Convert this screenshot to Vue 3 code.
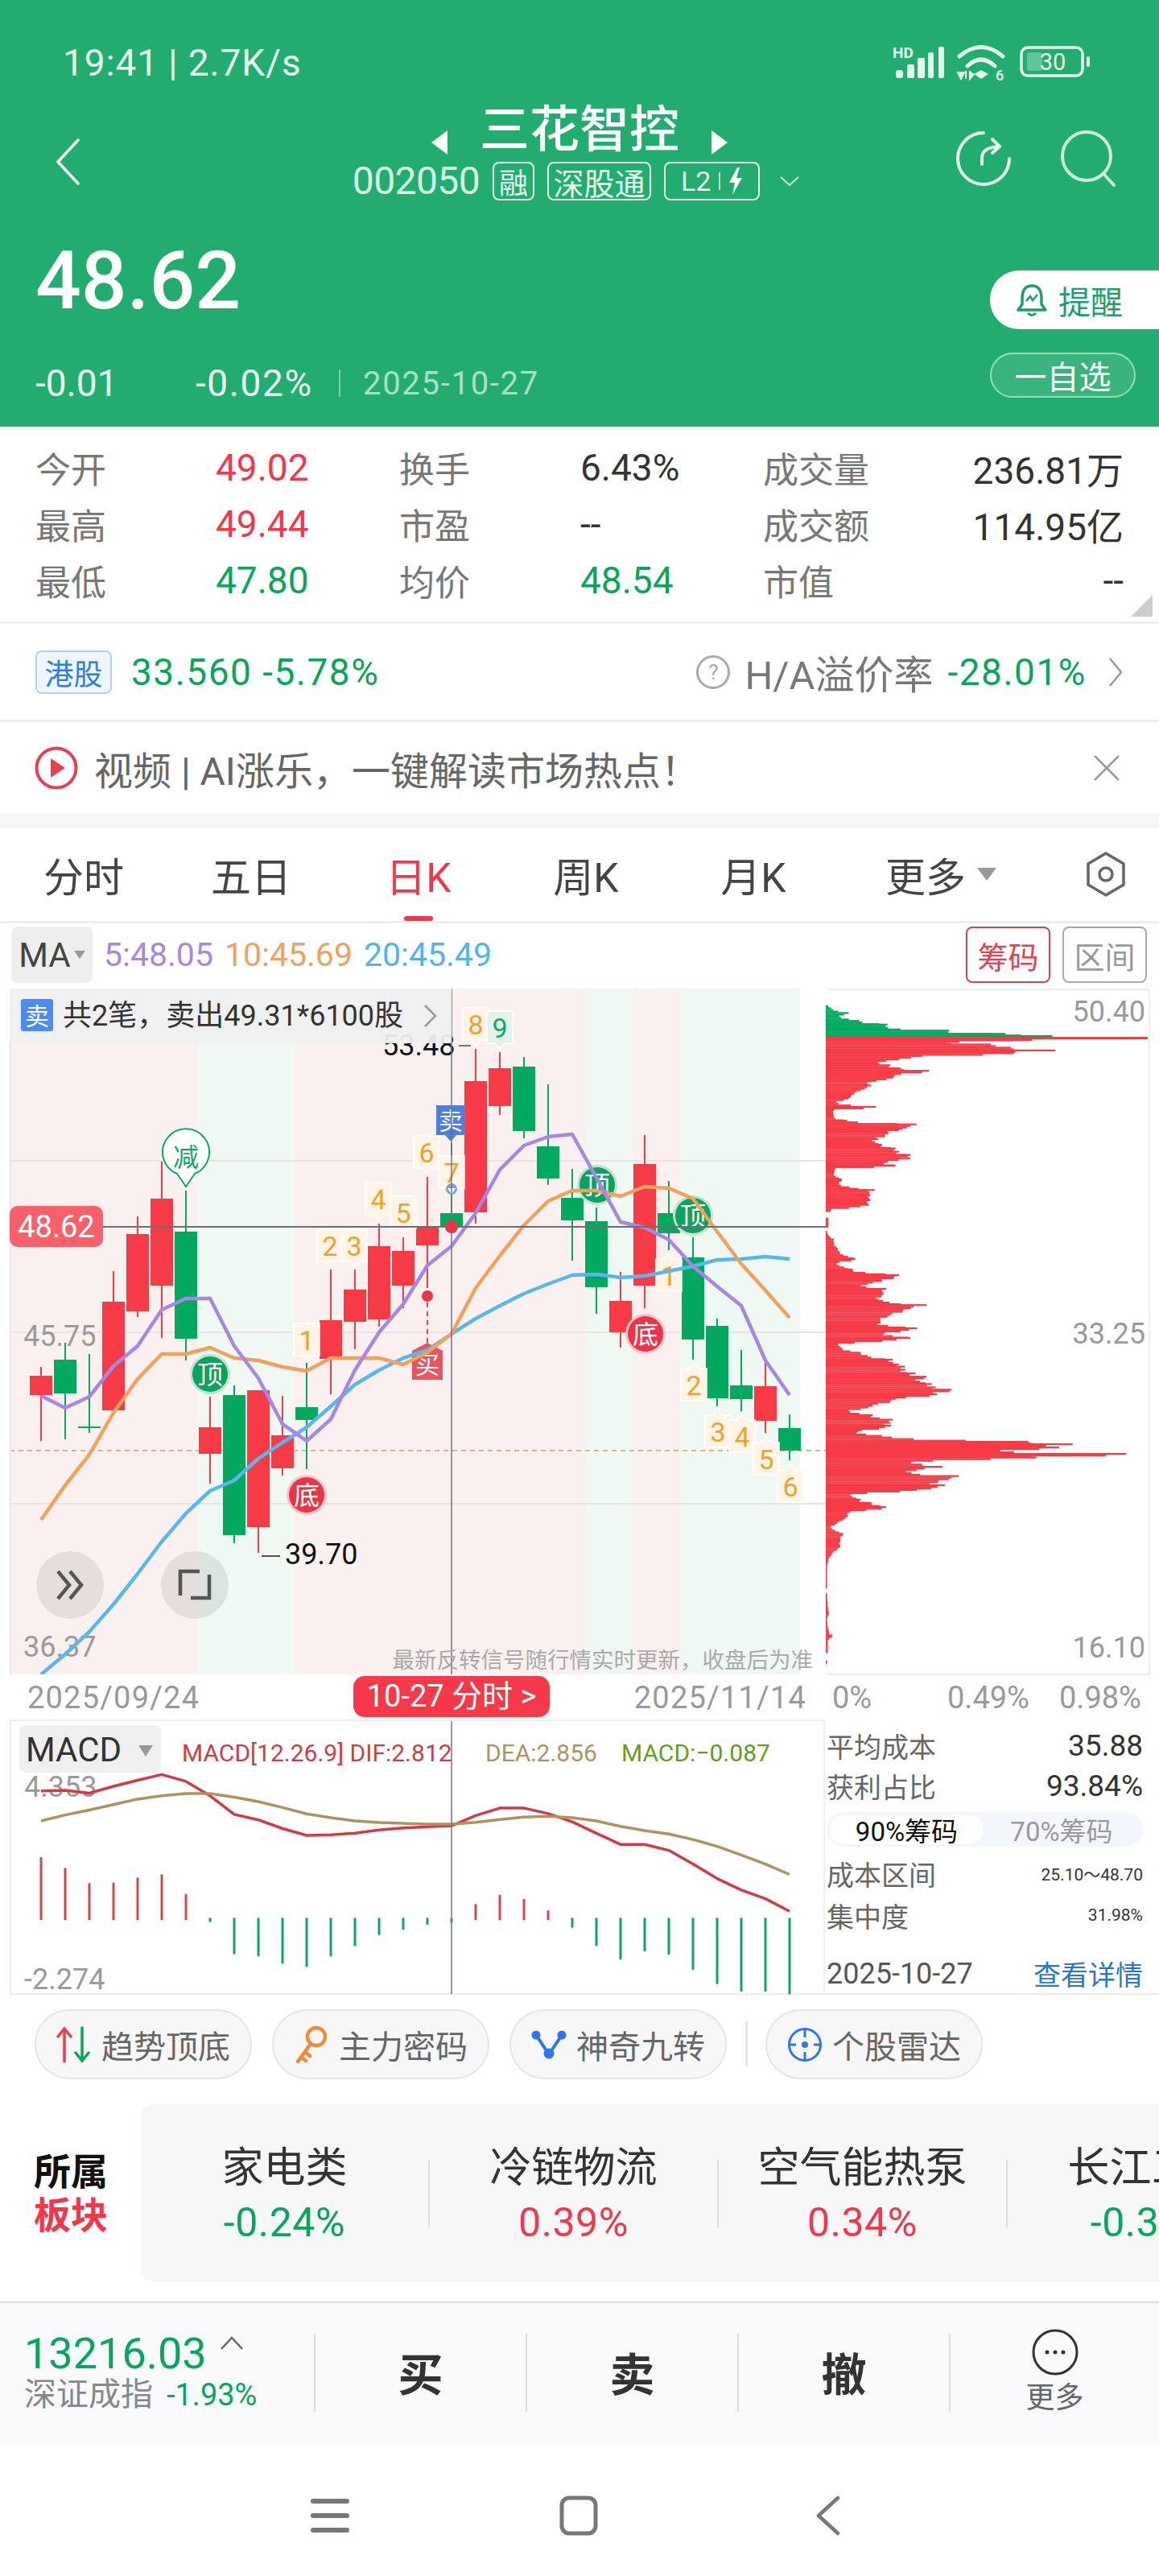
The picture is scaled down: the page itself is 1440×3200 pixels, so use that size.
<template>
	<div class="page">
		<!-- 顶部行情头 -->
		<header class="head">
			<div class="status">
				<span class="status-time">19:41 | 2.7K/s</span>
				<svg class="status-icons" width="246" height="50" viewBox="1110 53 246 50">
					<text x="1110" y="72" class="hd">HD</text>
					<rect x="1114" y="87" width="9" height="10" rx="3" fill="#e4f8ee" />
					<rect x="1128" y="80" width="9" height="17" rx="2" fill="#e4f8ee" />
					<rect x="1141" y="72" width="9" height="25" rx="2" fill="#e4f8ee" />
					<rect x="1154" y="65" width="7" height="32" rx="2" fill="#e4f8ee" />
					<rect x="1167" y="58" width="7" height="39" rx="2" fill="#e4f8ee" />
					<path d="M1193 70 Q1220 47 1247 70 M1203 82 Q1220 66 1237 82" fill="none" stroke="#e4f8ee" stroke-width="5" stroke-linecap="round" />
					<path d="M1211 92 L1220 87 L1229 92 L1220 98 Z" fill="#e4f8ee" />
					<path d="M1191 90 h8 l-4 8 z M1201 88 v10 M1206 88 v10 l5 -6" fill="#e4f8ee" stroke="#e4f8ee" stroke-width="2" />
					<text x="1238" y="100" class="wifi-6">6</text>
					<rect x="1270" y="59" width="76" height="35" rx="8" fill="none" stroke="#e4f8ee" stroke-width="3.5" />
					<rect x="1277" y="65" width="19" height="23" rx="3" fill="#5cc796" />
					<text x="1309" y="87" text-anchor="middle" class="batt">30</text>
					<rect x="1351" y="70" width="4" height="13" rx="2" fill="#e4f8ee" />
				</svg>
			</div>
			<div class="nav">
				<div class="nav-left">
					<svg width="30" height="58" viewBox="0 0 30 58"><path d="M28 2 L3 29 L28 56" fill="none" stroke="#fff" stroke-width="3.5" stroke-linecap="round" stroke-linejoin="round" /></svg>
				</div>
				<div class="nav-center">
					<div class="title-row">
						<span class="tri tri-left"></span>
						<span class="title">三花智控</span>
						<span class="tri tri-right"></span>
					</div>
					<div class="code-row">
						<span class="code">002050</span>
						<span class="code-tag tag-one">融</span>
						<span class="code-tag tag-three">深股通</span>
						<span class="code-tag tag-l2">
							<b>L2</b>
							<i class="tag-sep"></i>
							<svg width="18" height="34" viewBox="0 0 18 34"><path d="M11 0 L1 19 H8 L5 34 L17 13 H10 L14 0 Z" fill="#fff" /></svg>
						</span>
						<svg class="code-arrow" width="26" height="14" viewBox="0 0 26 14"><path d="M2 2 L13 12 L24 2" fill="none" stroke="#cdeede" stroke-width="2" /></svg>
					</div>
				</div>
				<div class="nav-right">
					<svg width="70" height="72" viewBox="0 0 70 72">
						<path d="M34 3 A32 32 0 1 0 66 35" fill="none" stroke="#e4f8ee" stroke-width="4" stroke-linecap="round" />
						<path d="M32 42 V34 Q32 21 54 20 M45 11 L54 20 L45 28" fill="none" stroke="#e4f8ee" stroke-width="4" stroke-linecap="round" stroke-linejoin="round" />
					</svg>
					<svg width="70" height="72" viewBox="0 0 70 72">
						<circle cx="32" cy="32" r="30" fill="none" stroke="#c9eedc" stroke-width="4" />
						<path d="M55 56 L66 68" stroke="#c9eedc" stroke-width="4" stroke-linecap="round" />
					</svg>
				</div>
			</div>
			<div class="price-row">
				<div class="price-left">
					<div class="price">48.62</div>
					<div class="change">
						<span class="chg-a">-0.01</span>
						<span class="chg-b">-0.02%</span>
						<i class="chg-sep"></i>
						<span class="chg-date">2025-10-27</span>
					</div>
				</div>
				<div class="price-right">
					<div class="remind">
						<svg width="38" height="42" viewBox="0 0 38 42">
							<path d="M19 3 C9 3 7 11 7 19 V26 L2 33 H36 L31 26 V19 C31 11 29 3 19 3 Z" fill="none" stroke="#1f9f67" stroke-width="3.5" stroke-linejoin="round" />
							<path d="M12 22 L17 16 L20 21 L26 14" fill="none" stroke="#1f9f67" stroke-width="2.5" />
							<path d="M14 37 Q19 42 24 37" fill="none" stroke="#1f9f67" stroke-width="3" />
						</svg>
						<span>提醒</span>
					</div>
					<div class="watch">一自选</div>
				</div>
			</div>
		</header>

		<!-- 盘口数据 -->
		<section class="quote">
			<template v-for="row in quoteRows" :key="row[0].k">
				<template v-for="(cell, idx) in row" :key="cell.k">
					<span class="q-label">{{ cell.k }}</span>
					<span class="q-value" :class="[cell.c, { 'q-last': idx === 2 }]">{{ cell.v }}</span>
				</template>
			</template>
			<i class="corner"></i>
		</section>

		<section class="hk">
			<div class="hk-left">
				<span class="hk-tag">港股</span>
				<span class="hk-num">33.560 -5.78%</span>
			</div>
			<div class="hk-right">
				<span class="hk-help">?</span>
				<span class="hk-text">H/A溢价率</span>
				<span class="hk-num">-28.01%</span>
				<svg class="hk-chevron" width="20" height="40" viewBox="0 0 20 40"><path d="M3 3 L17 20 L3 37" fill="none" stroke="#999" stroke-width="2.5" /></svg>
			</div>
		</section>

		<section class="notice">
			<div class="notice-left">
				<svg width="54" height="54" viewBox="0 0 54 54">
					<circle cx="27" cy="27" r="24.5" fill="none" stroke="#e8404c" stroke-width="4" />
					<path d="M20 15 L38 27 L20 39 Z" fill="#e8404c" />
				</svg>
				<span>视频 | AI涨乐，一键解读市场热点！</span>
			</div>
			<svg width="34" height="34" viewBox="0 0 34 34"><path d="M2 2 L32 32 M32 2 L2 32" stroke="#999" stroke-width="2.5" /></svg>
		</section>
		<div class="gap"></div>

		<!-- 周期切换 -->
		<nav class="tabs">
			<span v-for="t in tabs" :key="t" class="tab" :class="{ on: t === '日K' }">{{ t }}</span>
			<span class="tab tab-more">更多<i class="more-tri"></i></span>
			<span class="tab-set">
				<svg width="50" height="56" viewBox="0 0 50 56">
					<path d="M25 2 L47 15 V41 L25 54 L3 41 V15 Z" fill="none" stroke="#666" stroke-width="3.5" stroke-linejoin="round" />
					<circle cx="25" cy="28" r="8" fill="none" stroke="#666" stroke-width="3.5" />
				</svg>
			</span>
		</nav>

		<div class="ma-row">
			<div class="ma-left">
				<span class="ma-box">MA<i></i></span>
				<span class="ma-a">5:48.05</span>
				<span class="ma-b">10:45.69</span>
				<span class="ma-c">20:45.49</span>
			</div>
			<div class="ma-right">
				<span class="ma-btn ma-on">筹码</span>
				<span class="ma-btn">区间</span>
			</div>
		</div>

		<div class="board">
			<div class="board-left">
				<!-- K线主图 -->
				<svg class="kline" width="1026" height="852" viewBox="0 1228 1026 852">
					<rect x="12" y="1228" width="982" height="852" fill="#faf0f0" />
					<rect v-for="s in stripes" :key="s[0]" :x="s[0]" y="1228" :width="s[1]" height="852" fill="#eff8f2" />
					<line v-for="y in [1442, 1655, 1868]" :key="y" x1="12" x2="1026" :y1="y" :y2="y" stroke="#e8e4e4" stroke-width="2" />
					<line x1="12" x2="1026" y1="1802" y2="1802" stroke="#cdb98f" stroke-width="2" stroke-dasharray="6 5" />
					<rect x="12" y="1228" width="2" height="852" fill="#e8e8e8" />

					<text x="29" y="1672" class="axis">45.75</text>
					<text x="29" y="2058" class="axis">36.37</text>

					<g v-for="c in candles" :key="c.i">
						<rect :x="c.x - 1" :y="c.wt" width="2" :height="c.wb - c.wt" :fill="c.color" />
						<rect :x="c.x - 14" :y="c.bt" width="28" :height="c.bb - c.bt" :fill="c.color" />
					</g>

					<text x="475" y="1311" class="hi-lo">53.48</text>
					<line x1="570" x2="585" y1="1299" y2="1299" stroke="#777" stroke-width="2" />
					<line x1="325" x2="348" y1="1933" y2="1933" stroke="#555" stroke-width="2" />
					<text x="354" y="1943" class="hi-lo">39.70</text>

					<!-- 神奇九转 -->
					<g v-for="n in nineTags" :key="n.key">
						<path :d="n.d" :fill="n.bg" stroke="#fff" stroke-width="1.5" />
						<text :x="n.x + 16" :y="n.ty" text-anchor="middle" class="nine" :fill="n.fg">{{ n.t }}</text>
					</g>

					<!-- 顶底标记 -->
					<g v-for="m in marks" :key="m.x">
						<circle :cx="m.x" :cy="m.y" r="25" :fill="m.halo" />
						<circle :cx="m.x" :cy="m.y" r="22" :fill="m.fill" />
						<text :x="m.x" :y="m.y + 12" text-anchor="middle" class="mark">{{ m.t }}</text>
					</g>

					<path d="M231 1474 L220 1458 A29 29 0 1 1 242 1458 Z" fill="#fff" stroke="#13a566" stroke-width="2" />
					<text x="231" y="1449" text-anchor="middle" class="jian">减</text>

					<path d="M542 1373 H578 V1410 H567 L560 1418 L553 1410 H542 Z" fill="#4d7fe0" />
					<text x="560" y="1403" text-anchor="middle" class="flag">卖</text>
					<circle cx="561" cy="1477" r="7" fill="#7b9fd8" />
					<path d="M556 1476 L561 1484 L566 1476" fill="#fff" />
					<line x1="531" x2="531" y1="1618" y2="1668" stroke="#e8404c" stroke-width="2" stroke-dasharray="6 5" />
					<circle cx="531" cy="1610" r="7" fill="#e8354a" />
					<path d="M512 1678 L531 1668 L550 1678 V1714 H512 Z" fill="#ec5360" />
					<text x="531" y="1706" text-anchor="middle" class="flag">买</text>

					<polyline :points="ma20" fill="none" stroke="#59b7ee" stroke-width="4.5" stroke-linejoin="round" />
					<polyline :points="ma10" fill="none" stroke="#f2a05e" stroke-width="4.5" stroke-linejoin="round" />
					<polyline :points="ma5" fill="none" stroke="#a687e6" stroke-width="4.5" stroke-linejoin="round" />

					<line x1="561" x2="561" y1="1228" y2="2080" stroke="#70757f" stroke-width="1.5" />
					<line x1="12" x2="1026" y1="1524" y2="1524" stroke="#6b6f75" stroke-width="2" />
					<circle cx="561" cy="1524" r="8" fill="#e8354a" />

					<rect x="12" y="1498" width="116" height="51" rx="10" fill="#f8616c" />
					<text x="70" y="1537" text-anchor="middle" class="last">48.62</text>

					<circle cx="87" cy="1969" r="42" fill="#000" opacity="0.08" />
					<circle cx="242" cy="1969" r="42" fill="#000" opacity="0.08" />
					<path d="M72 1952 L86 1969 L72 1986 M87 1952 L101 1969 L87 1986" fill="none" stroke="#555" stroke-width="4.5" />
					<path d="M224 1982 V1952 H248 M260 1956 V1985 H237" fill="none" stroke="#555" stroke-width="4.5" />

					<text x="1010" y="2072" text-anchor="end" class="tip">最新反转信号随行情实时更新，收盘后为准</text>

					<rect x="12" y="1228" width="549" height="68" fill="#efefef" opacity="0.94" />
					<rect x="26" y="1241" width="40" height="40" rx="3" fill="#4d8bf5" />
					<text x="46" y="1273" text-anchor="middle" class="flag">卖</text>
					<text x="78" y="1274" class="deal">共2笔，卖出49.31*6100股</text>
					<path d="M528 1249 L541 1262 L528 1275" fill="none" stroke="#999" stroke-width="2.5" />
				</svg>

				<div class="dates">
					<span>2025/09/24</span>
					<span class="date-pill">10-27 分时 &gt;</span>
					<span class="date-end">2025/11/14</span>
				</div>

				<!-- MACD 副图 -->
				<svg class="macd" width="1026" height="342" viewBox="0 2136 1026 342">
					<rect x="12" y="2136" width="1014" height="2" fill="#eee" />
					<rect x="12" y="2136" width="2" height="342" fill="#eee" />
					<rect x="12" y="2476" width="1014" height="2" fill="#eee" />
					<rect x="24" y="2143" width="176" height="59" rx="8" fill="#efefef" />
					<text x="32" y="2188" class="macd-name">MACD</text>
					<path d="M172 2168 H190 L181 2182 Z" fill="#999" />
					<text x="226" y="2188" class="macd-leg" fill="#d43a41">MACD[12.26.9] DIF:2.812</text>
					<text x="603" y="2188" class="macd-leg" fill="#b0915f">DEA:2.856</text>
					<text x="772" y="2188" class="macd-leg" fill="#5fa01c">MACD:−0.087</text>
					<text x="30" y="2232" class="axis">4.353</text>
					<text x="30" y="2471" class="axis">-2.274</text>
					<rect v-for="b in hist" :key="b.x" :x="b.x - 1.5" :y="b.y" width="3" :height="b.h" :fill="b.color" />
					<polyline :points="dif" fill="none" stroke="#d43a41" stroke-width="3.5" stroke-linejoin="round" />
					<polyline :points="dea" fill="none" stroke="#b0915f" stroke-width="3.5" stroke-linejoin="round" />
					<line x1="561" x2="561" y1="2138" y2="2477" stroke="#70757f" stroke-width="1.5" />
				</svg>
			</div>

			<div class="board-right">
				<!-- 筹码分布 -->
				<svg class="chips" width="414" height="853" viewBox="1026 1228 414 853">
					<rect x="1026" y="1228" width="402" height="853" fill="#fff" />
					<rect x="1427" y="1228" width="2" height="853" fill="#eee" />
					<rect x="1026" y="1228" width="403" height="2" fill="#eee" />
					<rect x="1026" y="2079" width="403" height="2" fill="#eee" />
					<rect v-for="r in chipBars" :key="r.y" x="1026" :y="r.y" :width="r.w" :height="r.h" :fill="r.color" />
					<rect x="1026" y="1288" width="400" height="3" fill="#e8404c" />
					<text x="1423" y="1269" text-anchor="end" class="axis">50.40</text>
					<text x="1423" y="1669" text-anchor="end" class="axis">33.25</text>
					<text x="1423" y="2059" text-anchor="end" class="axis">16.10</text>
				</svg>
				<div class="pct"><span>0%</span><span>0.49%</span><span>0.98%</span></div>
				<div class="stats">
					<div class="st-row st-row-a"><span class="st-k">平均成本</span><span class="st-v">35.88</span></div>
					<div class="st-row st-row-a"><span class="st-k">获利占比</span><span class="st-v">93.84%</span></div>
					<div class="st-toggle"><span class="st-on">90%筹码</span><span class="st-off">70%筹码</span></div>
					<div class="st-row st-row-b"><span class="st-k">成本区间</span><span class="st-small">25.10～48.70</span></div>
					<div class="st-row st-row-b"><span class="st-k">集中度</span><span class="st-small">31.98%</span></div>
					<div class="st-foot"><span class="st-date">2025-10-27</span><span class="st-link">查看详情</span></div>
				</div>
			</div>
		</div>

		<div class="tools">
			<span class="pill">
				<svg width="44" height="46" viewBox="0 0 44 46">
					<path d="M10 44 V4 M2 13 L10 3 L18 13" fill="none" stroke="#e8404c" stroke-width="3.5" stroke-linecap="round" />
					<path d="M32 2 V42 M24 33 L32 43 L40 33" fill="none" stroke="#07a65b" stroke-width="3.5" stroke-linecap="round" />
				</svg>
				趋势顶底
			</span>
			<span class="pill">
				<svg width="44" height="50" viewBox="0 0 44 50">
					<circle cx="28" cy="15" r="11" fill="none" stroke="#f08a35" stroke-width="4.5" />
					<path d="M21 24 L5 46 M9 40 L15 45 M14 34 L20 39" fill="none" stroke="#f08a35" stroke-width="4.5" stroke-linecap="round" />
				</svg>
				主力密码
			</span>
			<span class="pill">
				<svg width="44" height="40" viewBox="0 0 44 40">
					<path d="M6 8 L22 32 L38 8" fill="none" stroke="#2e74ee" stroke-width="4" />
					<circle cx="6" cy="8" r="5.5" fill="#2e74ee" />
					<circle cx="38" cy="8" r="5.5" fill="#2e74ee" />
					<circle cx="22" cy="31" r="6.5" fill="#2e74ee" />
				</svg>
				神奇九转
			</span>
			<i class="tool-sep"></i>
			<span class="pill">
				<svg width="44" height="44" viewBox="0 0 44 44">
					<circle cx="22" cy="22" r="19.5" fill="none" stroke="#2e74ee" stroke-width="3" />
					<circle cx="22" cy="22" r="4" fill="#2e74ee" />
					<path d="M22 2 V13 M22 31 V42 M2 22 H11 M33 22 H42" stroke="#2e74ee" stroke-width="3" />
				</svg>
				个股雷达
			</span>
		</div>

		<section class="sector">
			<div class="sector-title"><span>所属</span><span class="sector-red">板块</span></div>
			<div class="sector-card">
				<div v-for="s in sectors" :key="s.name" class="sector-item">
					<span class="sector-name">{{ s.name }}</span>
					<span class="sector-val" :class="s.c">{{ s.val }}</span>
				</div>
			</div>
		</section>

		<footer class="trade">
			<div class="index">
				<div class="index-top">
					<span class="index-num">13216.03</span>
					<svg width="30" height="18" viewBox="0 0 30 18"><path d="M2 16 L15 2 L28 16" fill="none" stroke="#666" stroke-width="2.5" /></svg>
				</div>
				<div class="index-sub"><span>深证成指</span><b>-1.93%</b></div>
			</div>
			<span class="trade-btn">买</span>
			<span class="trade-btn">卖</span>
			<span class="trade-btn">撤</span>
			<span class="trade-more">
				<svg width="58" height="58" viewBox="0 0 58 58">
					<circle cx="29" cy="29" r="27" fill="none" stroke="#333" stroke-width="3" />
					<circle cx="19" cy="29" r="2.5" fill="#333" />
					<circle cx="29" cy="29" r="2.5" fill="#333" />
					<circle cx="39" cy="29" r="2.5" fill="#333" />
				</svg>
				<span>更多</span>
			</span>
		</footer>

		<div class="sysnav">
			<svg width="48" height="46" viewBox="0 0 48 46"><path d="M3 5 H45 M3 23 H45 M3 41 H45" stroke="#777" stroke-width="6" stroke-linecap="round" /></svg>
			<svg width="48" height="50" viewBox="0 0 48 50"><rect x="3" y="3" width="42" height="44" rx="9" fill="none" stroke="#777" stroke-width="5" /></svg>
			<svg width="32" height="50" viewBox="0 0 32 50"><path d="M28 3 L4 25 L28 47" fill="none" stroke="#777" stroke-width="4.5" stroke-linecap="round" stroke-linejoin="round" /></svg>
		</div>
	</div>
</template>

<script setup>
	const RED = '#f63b47'
	const GREEN = '#03a95e'

	const quoteRows = [
		[
			{ k: '今开', v: '49.02', c: 'up' },
			{ k: '换手', v: '6.43%', c: '' },
			{ k: '成交量', v: '236.81万', c: '' },
		],
		[
			{ k: '最高', v: '49.44', c: 'up' },
			{ k: '市盈', v: '--', c: '' },
			{ k: '成交额', v: '114.95亿', c: '' },
		],
		[
			{ k: '最低', v: '47.80', c: 'down' },
			{ k: '均价', v: '48.54', c: 'down' },
			{ k: '市值', v: '--', c: '' },
		],
	]

	const tabs = ['分时', '五日', '日K', '周K', '月K']

	const sectors = [
		{ name: '家电类', val: '-0.24%', c: 'down' },
		{ name: '冷链物流', val: '0.39%', c: 'up' },
		{ name: '空气能热泵', val: '0.34%', c: 'up' },
		{ name: '长江三角', val: '-0.31%', c: 'down' },
	]

	const stripes = [
		[246, 120],
		[727, 60],
		[846, 148],
	]

	const xAt = (i) => 51 + 30 * i

	// 实体上沿、实体下沿、影线高点、影线低点
	const rawCandles = [
		['r', 1709, 1733, 1698, 1790],
		['g', 1689, 1731, 1668, 1788],
		['g', 1772, 1774, 1682, 1780],
		['r', 1617, 1752, 1579, 1752],
		['r', 1533, 1629, 1511, 1636],
		['r', 1489, 1597, 1443, 1662],
		['g', 1530, 1663, 1479, 1690],
		['r', 1773, 1806, 1735, 1843],
		['g', 1733, 1907, 1721, 1917],
		['r', 1727, 1897, 1727, 1929],
		['r', 1783, 1824, 1734, 1833],
		['g', 1748, 1764, 1693, 1825],
		['r', 1640, 1688, 1577, 1732],
		['r', 1602, 1642, 1577, 1676],
		['r', 1548, 1639, 1520, 1648],
		['r', 1554, 1597, 1537, 1625],
		['r', 1525, 1547, 1462, 1600],
		['g', 1507, 1524, 1420, 1524],
		['r', 1343, 1506, 1303, 1520],
		['r', 1327, 1374, 1307, 1385],
		['g', 1325, 1405, 1313, 1414],
		['g', 1424, 1464, 1347, 1472],
		['g', 1488, 1516, 1452, 1566],
		['g', 1517, 1599, 1500, 1632],
		['r', 1616, 1655, 1580, 1674],
		['r', 1446, 1597, 1410, 1625],
		['g', 1507, 1532, 1467, 1553],
		['g', 1562, 1664, 1537, 1689],
		['g', 1647, 1737, 1638, 1747],
		['g', 1721, 1738, 1677, 1753],
		['r', 1722, 1765, 1690, 1780],
		['g', 1774, 1802, 1757, 1814],
	]

	const candles = rawCandles.map((c, i) => ({
		i,
		x: xAt(i),
		color: c[0] === 'r' ? RED : GREEN,
		bt: c[1],
		bb: c[2],
		wt: c[3],
		wb: c[4],
	}))

	const toPoints = (arr) => arr.map((y, i) => `${xAt(i)},${y}`).join(' ')

	const ma5 = toPoints([
		1734, 1749, 1735, 1697, 1672, 1627, 1613, 1613, 1672, 1712, 1769, 1790, 1763, 1702, 1655, 1620, 1572, 1548,
		1507, 1453, 1423, 1412, 1409, 1463, 1518, 1525, 1540, 1573, 1598, 1622, 1690, 1733,
	])
	const ma10 = toPoints([
		1888, 1845, 1807, 1755, 1713, 1682, 1682, 1674, 1687, 1690, 1698, 1703, 1687, 1687, 1687, 1695, 1680, 1657,
		1600, 1560, 1522, 1492, 1479, 1479, 1486, 1474, 1476, 1489, 1530, 1570, 1603, 1637,
	])
	const ma20 = toPoints([
		2080, 2055, 2027, 1993, 1955, 1915, 1880, 1852, 1839, 1812, 1792, 1773, 1747, 1720, 1702, 1687, 1677, 1657,
		1638, 1622, 1607, 1595, 1584, 1583, 1587, 1585, 1579, 1573, 1565, 1564, 1561, 1564,
	])

	const tagColor = { o: ['#fff4e6', '#f0a030'], g: ['#e4f3ea', '#13a566'] }

	// dir: 1 尖角朝下（标签在K线上方）, -1 尖角朝上
	const tag = (t, x, top, dir, tone = 'o') => {
		const w = 32
		const h = 40
		const c = x + w / 2
		const d =
			dir === 1
				? `M${x} ${top} H${x + w} V${top + h} H${c + 6} L${c} ${top + h + 7} L${c - 6} ${top + h} H${x} Z`
				: `M${x} ${top} H${c - 6} L${c} ${top - 7} L${c + 6} ${top} H${x + w} V${top + h} H${x} Z`
		return { key: `${t}-${x}`, t, x, d, ty: top + 33, bg: tagColor[tone][0], fg: tagColor[tone][1] }
	}

	const nineTags = [
		tag('1', 365, 1644, 1),
		tag('2', 394, 1527, 1),
		tag('3', 424, 1527, 1),
		tag('4', 454, 1469, 1),
		tag('5', 485, 1486, 1),
		tag('6', 514, 1411, 1),
		tag('7', 545, 1436, 1),
		tag('8', 575, 1252, 1),
		tag('9', 605, 1256, 1, 'g'),
		tag('1', 815, 1564, -1),
		tag('2', 846, 1700, -1),
		tag('3', 876, 1758, -1),
		tag('4', 906, 1764, -1),
		tag('5', 936, 1792, -1),
		tag('6', 966, 1826, -1),
	]

	const marks = [
		{ t: '顶', x: 261, y: 1707, fill: '#0ba35f', halo: '#bfe5d0' },
		{ t: '顶', x: 742, y: 1472, fill: '#0ba35f', halo: '#bfe5d0' },
		{ t: '顶', x: 861, y: 1510, fill: '#0ba35f', halo: '#bfe5d0' },
		{ t: '底', x: 381, y: 1857, fill: '#e8354a', halo: '#f7c6cb' },
		{ t: '底', x: 802, y: 1657, fill: '#e8354a', halo: '#f7c6cb' },
	]

	const macdY = (v) => Math.round((2080 + v / 2.95) * 10) / 10

	const dif = toPoints(
		[
			427, 425, 435, 410, 388, 367, 392, 445, 513, 533, 565, 590, 588, 582, 570, 563, 558, 555, 517, 490, 490, 510,
			540, 582, 623, 623, 645, 695, 748, 790, 822, 868,
		].map(macdY)
	)
	const dea = toPoints(
		[
			537, 515, 497, 477, 457, 445, 437, 437, 450, 466, 488, 511, 525, 537, 543, 546, 549, 549, 542, 532, 523, 520,
			525, 537, 557, 572, 585, 605, 630, 662, 695, 733,
		].map(macdY)
	)

	// 正数为红柱顶端，负数为绿柱底端
	const hist = [
		670, 710, 765, 763, 745, 733, 805, -907, -1025, -1033, -1060, -1072, -1033, -995, -955, -935, -917, -910, 842,
		808, 823, 865, -928, -995, -1045, -1015, -1027, -1082, -1135, -1162, -1162, -1172,
	].map((v, i) => {
		const up = v > 0
		const a = up ? macdY(v) : macdY(892)
		const b = up ? macdY(900) : macdY(-v)
		return { x: xAt(i), y: a, h: b - a, color: up ? '#d9444b' : '#0ea663' }
	})

	// 筹码峰：每项 [起始行, 宽度]，按截图比例记录
	const chipGreen = [
		[48, 0], [50, 8], [55, 20], [65, 85], [72, 50], [82, 125], [90, 230], [97, 230], [103, 460], [110, 670], [115, 845],
	]
	const chipRed = [
		[120, 1190], [124, 700], [128, 450], [133, 615], [140, 690], [146, 855], [152, 700], [158, 360], [165, 275], [172, 195],
		[178, 240], [185, 280], [190, 385], [197, 280], [205, 250], [213, 170], [222, 170], [232, 130], [240, 105], [250, 85],
		[258, 30], [268, 187], [275, 30], [290, 30], [298, 80], [306, 338], [315, 285], [325, 235], [338, 195], [350, 210],
		[358, 260], [372, 315], [380, 315], [388, 220], [395, 260], [402, 35], [412, 30], [425, 60], [435, 50], [448, 182],
		[460, 165], [470, 165], [480, 160], [490, 20], [495, 0], [510, 10], [530, 0], [538, 5], [555, 30], [575, 45], [597, 110],
		[605, 40], [620, 100], [632, 273], [645, 210], [655, 130], [662, 225], [675, 210], [688, 213], [697, 375], [708, 290],
		[722, 230], [735, 205], [747, 340], [757, 220], [768, 315], [780, 45], [790, 60], [800, 130], [815, 250], [830, 295],
		[845, 335], [852, 375], [868, 395], [880, 468], [890, 415], [900, 260], [915, 175], [925, 85], [935, 175], [945, 250],
		[958, 243], [970, 120], [980, 210], [993, 755], [998, 920], [1005, 870], [1012, 650], [1019, 1120], [1027, 785],
		[1035, 325], [1047, 435], [1057, 300], [1067, 495], [1077, 420], [1087, 445], [1097, 340], [1105, 100], [1118, 130],
		[1125, 170], [1134, 225], [1145, 85], [1155, 80], [1165, 50], [1175, 20], [1192, 65], [1205, 55], [1220, 55], [1232, 25],
		[1245, 10], [1260, 5], [1312, 0], [1322, 5], [1365, 12], [1372, 5], [1405, 12], [1412, 25], [1420, 8], [1450, 0],
		[1468, 5], [1473, 0],
	]

	// 按 2px 一行插值，并加一点固定抖动，让峰值边缘接近实际的毛刺；每段首行保留原宽度
	const toBars = (rows, end, color) => {
		const bars = []
		rows.forEach((r, i) => {
			const nextY = i + 1 < rows.length ? rows[i + 1][0] : end
			const nextW = i + 1 < rows.length ? rows[i + 1][1] : r[1]
			const top = 1220 + r[0] / 1.742
			const bottom = 1220 + nextY / 1.742
			for (let y = top; y < bottom; y += 2) {
				const t = (y - top) / (bottom - top)
				const flat = r[1] === 0 || nextW === 0
				const base = flat ? r[1] : r[1] + (nextW - r[1]) * t * t
				const noise = t === 0 ? 1 : 1 - ((Math.round(y) * 37) % 11) * 0.012
				bars.push({ y, h: 2.2, w: (base * noise) / 3, color })
			}
		})
		return bars
	}

	const chipBars = [...toBars(chipGreen, 120, GREEN), ...toBars(chipRed, 1473, RED)]
</script>

<style>
	html,
	body {
		margin: 0;
		background: #fff;
	}
</style>

<style scoped>
	.page {
		width: 1440px;
		height: 3200px;
		background: #fff;
		overflow: hidden;
		font-family: Roboto, "Noto Sans CJK SC", sans-serif;
		color: #333;
	}

	/* head */
	.head {
		height: 530px;
		background: #23ac70;
		color: #fff;
		display: flex;
		flex-direction: column;
	}

	.status {
		height: 110px;
		padding: 45px 85px 0 78px;
		box-sizing: border-box;
		display: flex;
		justify-content: space-between;
		align-items: flex-start;
	}

	.status-time {
		font-size: 46px;
		line-height: 66px;
		color: #e4f8ee;
		letter-spacing: 0.9px;
	}

	.status-icons {
		margin-top: 8px;
	}

	.hd {
		font: 700 19px Roboto, sans-serif;
		fill: #e4f8ee;
	}

	.wifi-6 {
		font: 500 18px Roboto, sans-serif;
		fill: #e4f8ee;
	}

	.batt {
		font: 400 29px Roboto, sans-serif;
		fill: #e4f8ee;
	}

	.nav {
		height: 154px;
		display: grid;
		grid-template-columns: 1fr auto 1fr;
	}

	.nav-left {
		padding: 62px 0 0 69px;
	}

	.nav-center {
		display: flex;
		flex-direction: column;
		align-items: center;
	}

	.title-row {
		height: 90px;
		display: flex;
		align-items: center;
		gap: 40px;
		padding-top: 14px;
		box-sizing: border-box;
	}

	.title {
		font-size: 62px;
		line-height: 76px;
		font-weight: 500;
		color: #fff;
	}

	.tri {
		width: 0;
		height: 0;
		margin-top: 30px;
		border-top: 15px solid transparent;
		border-bottom: 15px solid transparent;
	}

	.tri-left {
		border-right: 20px solid #fff;
	}

	.tri-right {
		border-left: 20px solid #fff;
	}

	.code-row {
		display: flex;
		align-items: center;
		gap: 16px;
		height: 50px;
		margin-left: -8px;
	}

	.code {
		font-size: 48px;
		line-height: 50px;
		color: #d5f3e5;
		letter-spacing: -0.6px;
	}

	.code-tag {
		height: 48px;
		box-sizing: border-box;
		border: 2px solid #e6f8ef;
		border-radius: 8px;
		display: inline-flex;
		align-items: center;
		justify-content: center;
		font-size: 38px;
		color: #e6f8ef;
	}

	.tag-one {
		width: 52px;
		font-size: 36px;
	}

	.tag-three {
		width: 129px;
		font-size: 38px;
	}

	.tag-l2 {
		width: 119px;
		gap: 10px;
	}

	.tag-l2 b {
		font-weight: 400;
		font-size: 34px;
	}

	.tag-sep {
		width: 2px;
		height: 22px;
		background: #bfe9d4;
	}

	.code-arrow {
		margin-left: 8px;
	}

	.nav-right {
		display: flex;
		justify-content: flex-end;
		gap: 60px;
		padding: 52px 52px 0 0;
	}

	.price-row {
		flex: 1;
		display: flex;
		justify-content: space-between;
	}

	.price-left {
		padding: 30px 0 0 44px;
	}

	.price {
		font-size: 100px;
		line-height: 110px;
		font-weight: 500;
		color: #fff;
	}

	.change {
		margin-top: 47px;
		height: 50px;
		display: flex;
		align-items: center;
		font-size: 46px;
		color: #e9faf1;
	}

	.chg-a {
		width: 199px;
	}

	.chg-b {
		width: 178px;
		letter-spacing: 1.6px;
	}

	.chg-sep {
		width: 2px;
		height: 34px;
		background: #7fd0aa;
		margin-right: 28px;
	}

	.chg-date {
		font-size: 40px;
		letter-spacing: 1.7px;
		color: #a8e0c6;
	}

	.price-right {
		width: 210px;
		padding-top: 72px;
	}

	.remind {
		height: 73px;
		background: #fff;
		border-radius: 36px 0 0 36px;
		display: flex;
		align-items: center;
		gap: 14px;
		padding-left: 33px;
		font-size: 40px;
		color: #1f9f67;
	}

	.watch {
		margin-top: 29px;
		width: 181px;
		height: 56px;
		box-sizing: border-box;
		border: 2px solid #96dcbb;
		border-radius: 28px;
		background: rgba(255, 255, 255, 0.1);
		display: flex;
		align-items: center;
		justify-content: center;
		font-size: 40px;
		color: #fff;
	}

	/* quote */
	.quote {
		position: relative;
		height: 245px;
		box-sizing: border-box;
		padding: 16px 44px 0;
		display: grid;
		grid-template-columns: 224px 228px 225px 227px 1fr auto;
		grid-auto-rows: 70px;
		align-items: center;
		border-bottom: 3px solid #eee;
	}

	.q-label {
		font-size: 44px;
		color: #777;
	}

	.q-value {
		font-size: 46px;
		color: #333;
	}

	.q-value.up,
	.sector-val.up {
		color: #f0384a;
	}

	.q-value.down,
	.sector-val.down {
		color: #07a65b;
	}

	.q-last {
		justify-self: end;
	}

	.corner {
		position: absolute;
		right: 8px;
		bottom: 6px;
		width: 0;
		height: 0;
		border-left: 27px solid transparent;
		border-bottom: 27px solid #ccc;
	}

	/* hk */
	.hk {
		height: 122px;
		box-sizing: border-box;
		padding: 0 44px;
		display: flex;
		justify-content: space-between;
		align-items: center;
		border-bottom: 3px solid #eee;
	}

	.hk-left {
		display: flex;
		align-items: center;
		gap: 24px;
	}

	.hk-tag {
		width: 95px;
		height: 54px;
		box-sizing: border-box;
		border: 2px solid #b3d0f0;
		border-radius: 8px;
		background: #f0f6fd;
		display: flex;
		align-items: center;
		justify-content: center;
		font-size: 36px;
		color: #2f7de0;
	}

	.hk-num {
		font-size: 46px;
		letter-spacing: 1.5px;
		color: #07a65b;
	}

	.hk-right {
		display: flex;
		align-items: center;
		gap: 18px;
	}

	.hk-chevron {
		margin-left: 8px;
	}

	.hk-help {
		width: 36px;
		height: 36px;
		border: 3px solid #aaa;
		border-radius: 50%;
		display: flex;
		align-items: center;
		justify-content: center;
		font-size: 26px;
		color: #aaa;
	}

	.hk-text {
		font-size: 49px;
		color: #777;
	}

	/* notice */
	.notice {
		height: 113px;
		box-sizing: border-box;
		padding: 0 48px 0 43px;
		display: flex;
		justify-content: space-between;
		align-items: center;
	}

	.notice-left {
		display: flex;
		align-items: center;
		gap: 20px;
		font-size: 48px;
		color: #666;
	}

	.gap {
		height: 18px;
		background: #f7f7f7;
	}

	/* tabs */
	.tabs {
		height: 116px;
		display: flex;
		align-items: center;
		border-bottom: 3px solid #eee;
	}

	.tab {
		position: relative;
		width: 208px;
		height: 116px;
		display: flex;
		align-items: center;
		justify-content: center;
		font-size: 50px;
		color: #444;
	}

	.tab.on {
		color: #f0384a;
	}

	.tab.on::after {
		content: "";
		position: absolute;
		left: 86px;
		bottom: 0;
		width: 36px;
		height: 6px;
		border-radius: 3px;
		background: #f0384a;
	}

	.tab-more {
		width: 240px;
		justify-content: flex-start;
		padding-left: 60px;
		box-sizing: border-box;
	}

	.more-tri {
		margin-left: 14px;
		border-left: 12px solid transparent;
		border-right: 12px solid transparent;
		border-top: 16px solid #999;
	}

	.tab-set {
		margin-left: auto;
		padding-right: 41px;
		display: flex;
	}

	/* ma row */
	.ma-row {
		height: 81px;
		padding: 4px 15px 0 14px;
		box-sizing: border-box;
		display: flex;
		justify-content: space-between;
	}

	.ma-left {
		display: flex;
		align-items: center;
		gap: 14px;
		height: 70px;
		font-size: 41px;
	}

	.ma-box {
		width: 101px;
		height: 70px;
		border-radius: 8px;
		background: #eee;
		display: flex;
		align-items: center;
		justify-content: center;
		font-size: 42px;
		color: #444;
		gap: 4px;
	}

	.ma-box i {
		border-left: 7px solid transparent;
		border-right: 7px solid transparent;
		border-top: 10px solid #999;
	}

	.ma-a {
		color: #a687e6;
	}

	.ma-b {
		color: #f2a05e;
	}

	.ma-c {
		color: #4fb4ee;
	}

	.ma-right {
		display: flex;
		gap: 15px;
	}

	.ma-btn {
		width: 105px;
		height: 70px;
		box-sizing: border-box;
		border: 2px solid #aaa;
		border-radius: 8px;
		display: flex;
		align-items: center;
		justify-content: center;
		font-size: 38px;
		color: #999;
	}

	.ma-btn.ma-on {
		border-color: #d9444b;
		color: #e8404c;
	}

	/* board */
	.board {
		display: flex;
		height: 1250px;
	}

	.board-left {
		width: 1026px;
	}

	.board-right {
		width: 414px;
	}

	.kline,
	.chips,
	.macd {
		display: block;
	}

	.axis {
		font: 400 36px Roboto, sans-serif;
		fill: #999;
	}

	.hi-lo {
		font: 400 36px Roboto, sans-serif;
		fill: #111;
	}

	.nine {
		font: 400 34px Roboto, sans-serif;
	}

	.mark {
		font: 400 32px "Noto Sans CJK SC", sans-serif;
		fill: #fff;
	}

	.jian {
		font: 400 32px "Noto Sans CJK SC", sans-serif;
		fill: #13a566;
	}

	.flag {
		font: 400 30px "Noto Sans CJK SC", sans-serif;
		fill: #fff;
	}

	.last {
		font: 400 38px Roboto, sans-serif;
		fill: #fff;
	}

	.tip {
		font: 400 27.5px "Noto Sans CJK SC", sans-serif;
		fill: #aaa;
	}

	.deal {
		font: 400 36px Roboto, "Noto Sans CJK SC", sans-serif;
		fill: #333;
	}

	.dates {
		height: 56px;
		padding: 2px 24px 0 34px;
		box-sizing: border-box;
		display: grid;
		grid-template-columns: 405px 244px 1fr;
		align-items: start;
		font-size: 38px;
		line-height: 54px;
		letter-spacing: 1.2px;
		color: #999;
	}

	.date-pill {
		height: 51px;
		border-radius: 14px;
		background: #f6394a;
		color: #fff;
		line-height: 51px;
		letter-spacing: 0;
		text-align: center;
	}

	.date-end {
		text-align: right;
	}

	.macd-name {
		font: 400 42px Roboto, sans-serif;
		fill: #333;
	}

	.macd-leg {
		font: 400 30px Roboto, sans-serif;
	}

	.pct {
		height: 55px;
		padding: 0 0 0 8px;
		box-sizing: border-box;
		display: grid;
		grid-template-columns: 143px 139px 1fr;
		align-items: center;
		font-size: 38px;
		color: #999;
	}

	.stats {
		height: 342px;
		box-sizing: border-box;
		padding: 7px 20px 0 2px;
		margin-left: -3px;
		border-left: 2px solid #eee;
		border-bottom: 2px solid #eee;
	}

	.st-row {
		display: flex;
		justify-content: space-between;
		align-items: center;
		height: 50px;
	}

	.st-row-b {
		height: 52px;
	}

	.st-k {
		font-size: 34px;
		color: #666;
	}

	.st-v {
		font-size: 37px;
		color: #333;
	}

	.st-small {
		font-size: 21px;
		color: #333;
	}

	.st-toggle {
		margin: 8px 0 7px;
		height: 43px;
		border-radius: 22px;
		background: #f3f6fa;
		display: flex;
		align-items: center;
		padding: 0 4px;
		font-size: 33px;
	}

	.st-on {
		width: 191px;
		height: 36px;
		border-radius: 18px;
		background: #fff;
		color: #111;
		display: flex;
		align-items: center;
		justify-content: center;
	}

	.st-off {
		flex: 1;
		color: #999;
		text-align: center;
	}

	.st-foot {
		margin-top: 22px;
		display: flex;
		justify-content: space-between;
		align-items: center;
	}

	.st-date {
		font-size: 36px;
		color: #555;
	}

	.st-link {
		font-size: 34px;
		color: #2e75c8;
	}

	/* tools */
	.tools {
		height: 136px;
		padding: 18px 0 0 43px;
		box-sizing: border-box;
		display: flex;
		align-items: flex-start;
		gap: 25px;
	}

	.pill {
		width: 270px;
		height: 87px;
		box-sizing: border-box;
		border: 2px solid #e6e6e6;
		border-radius: 44px;
		background: #f7f7f7;
		display: flex;
		align-items: center;
		justify-content: center;
		gap: 12px;
		font-size: 40px;
		color: #666;
	}

	.tool-sep {
		width: 3px;
		height: 55px;
		margin: 15px -3px 0 -2px;
		background: #e4e4e4;
	}

	/* sector */
	.sector {
		height: 221px;
		display: flex;
		align-items: stretch;
	}

	.sector-title {
		width: 175px;
		box-sizing: border-box;
		padding: 57px 0 0 42px;
		display: flex;
		flex-direction: column;
		font-size: 46px;
		line-height: 54px;
		font-weight: 700;
		color: #111;
	}

	.sector-red {
		color: #f0384a;
	}

	.sector-card {
		flex: 1;
		display: flex;
		overflow: hidden;
		background: #f7f7f7;
		border-radius: 16px 0 0 16px;
		padding-top: 69px;
		box-sizing: border-box;
	}

	.sector-item {
		flex: 0 0 359px;
		height: 84px;
		border-right: 2px solid #ddd;
		box-sizing: border-box;
		display: flex;
		flex-direction: column;
		align-items: center;
	}

	.sector-name {
		font-size: 52px;
		line-height: 60px;
		margin-top: -19px;
		color: #333;
		white-space: nowrap;
	}

	.sector-val {
		font-size: 50px;
		line-height: 54px;
		margin-top: 10px;
		letter-spacing: 0.6px;
	}

	/* trade */
	.trade {
		margin-top: 24px;
		height: 176px;
		background: #f9f9fb;
		border-top: 2px solid #ddd;
		display: flex;
		align-items: center;
	}

	.index {
		width: 392px;
		box-sizing: border-box;
		padding-left: 30px;
		border-right: 2px solid #ddd;
		height: 97px;
		display: flex;
		flex-direction: column;
		justify-content: center;
		margin-top: -4px;
	}

	.index-top {
		display: flex;
		align-items: flex-start;
		gap: 16px;
		height: 56px;
	}

	.index-top svg {
		margin-top: 8px;
	}

	.index-num {
		font-size: 54px;
		line-height: 60px;
		color: #07a65b;
	}

	.index-sub {
		display: flex;
		align-items: center;
		gap: 17px;
		font-size: 40px;
		line-height: 50px;
		color: #888;
		white-space: nowrap;
	}

	.index-sub b {
		font-weight: 400;
		font-size: 38px;
		color: #07a65b;
	}

	.trade-btn {
		width: 263px;
		height: 97px;
		box-sizing: border-box;
		border-right: 2px solid #ddd;
		display: flex;
		align-items: center;
		justify-content: center;
		font-size: 56px;
		font-weight: 700;
		color: #333;
		margin-top: -4px;
		padding-bottom: 4px;
	}

	.trade-more {
		flex: 1;
		display: flex;
		flex-direction: column;
		align-items: center;
		font-size: 36px;
		color: #666;
		line-height: 44px;
		gap: 6px;
		margin-top: -4px;
	}

	/* nav bar */
	.sysnav {
		height: 165px;
		padding-left: 386px;
		box-sizing: border-box;
		display: flex;
		align-items: center;
		margin-top: 5px;
	}

	.sysnav svg:nth-child(2) {
		margin-left: 261px;
	}

	.sysnav svg:nth-child(3) {
		margin-left: 270px;
	}
</style>
